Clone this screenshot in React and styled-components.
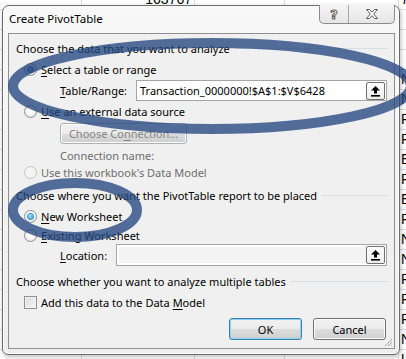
import styled, { createGlobalStyle } from "styled-components"

const GlobalStyle = createGlobalStyle`
* {
    box-sizing: border-box;
}
html, body {
    margin: 0;
    background-color: #ffffff;
    overflow: hidden;
}
body {
    font-family: "Noto Sans", "Open Sans", sans-serif;
    font-size: 11px;
    color: #000;
}
`
const Screen = styled.div`
    position: relative;
    width: 406px;
    height: 359px;
    overflow: hidden;
    background-color: #ffffff;
`
const Sheet = styled.div`
    display: flex;
    flex-direction: column;
    margin-top: -10px;
`
const SheetRow = styled.div`
    display: grid;
    grid-template-columns: 82px 113px 90px 114px 80px;
    height: 20px;
    border-bottom: 1px solid #dadcdd;
`
const Cell = styled.div`
    border-right: 1px solid #dadcdd;
    font-family: "Liberation Sans", Arial, sans-serif;
    font-size: 14px;
    line-height: 19px;
    padding: 0 2px;
    white-space: nowrap;
    overflow: hidden;
    text-align: ${(p) => (p.$right ? "right" : "left")};
    color: #000;
`
const Window = styled.div`
    position: absolute;
    left: 2px;
    top: 5px;
    width: 398px;
    height: 350px;
    display: flex;
    flex-direction: column;
    padding: 0 4px 5px 5px;
    border: 1px solid #6a6a6a;
    border-radius: 7px 7px 6px 6px;
    background: linear-gradient(#f8f8f8, #eeeeee);
    box-shadow: inset 0 0 0 1px #fdfdfd, 1px 2px 5px rgba(0, 0, 0, 0.25);
`
const TitleBar = styled.div`
    height: 27px;
    display: flex;
    align-items: flex-start;
`
const Title = styled.div`
    margin: 5px 0 0 1px;
    line-height: 16px;
    font-size: 11.5px;
`
const CaptionGroup = styled.div`
    margin-left: auto;
    margin-top: -1px;
    height: 19px;
    display: flex;
    border: 1px solid #8a8a8a;
    border-top: none;
    border-radius: 0 0 5px 5px;
    background: linear-gradient(#f4f4f4, #e6e6e6);
    overflow: hidden;
`
const CaptionButton = styled.div`
    width: ${(p) => p.$w}px;
    display: flex;
    align-items: center;
    justify-content: center;
    border-left: ${(p) => (p.$divider ? "1px solid #a8a8a8" : "none")};
    font-family: "DejaVu Sans", sans-serif;
    font-weight: bold;
    font-size: 13px;
    color: #ffffff;
    -webkit-text-stroke: 1px #5a5a5a;
`
const Client = styled.div`
    position: relative;
    flex: 1;
    display: flex;
    flex-direction: column;
    padding: 0 6px 0 7px;
    background-color: #f0f0f0;
    border: 1px solid #8f8f8f;
`
const Header = styled.div`
    height: 16px;
    margin-top: ${(p) => p.$mt}px;
    display: flex;
    align-items: center;
    white-space: nowrap;
    &::after {
        content: "";
        flex: 1;
        height: 1px;
        margin-left: 5px;
        background-color: #d5dee6;
    }
`
const Option = styled.div`
    height: 16px;
    margin-top: ${(p) => p.$mt}px;
    padding-left: 8px;
    display: flex;
    align-items: center;
    gap: 4px;
    color: ${(p) => (p.$disabled ? "#6d6d6d" : "#000")};
    white-space: nowrap;
`
const Radio = styled.span`
    width: 13px;
    height: 13px;
    border-radius: 50%;
    border: 1px solid ${(p) => (p.$disabled ? "#c4c4c4" : "#8e8f8f")};
    background: ${(p) =>
        p.$disabled
            ? "#f4f4f4"
            : "radial-gradient(circle at 50% 40%, #ffffff 30%, #dcdcdc 100%)"};
    display: flex;
    align-items: center;
    justify-content: center;
    &::after {
        content: "";
        display: ${(p) => (p.$checked ? "block" : "none")};
        width: 5px;
        height: 5px;
        border-radius: 50%;
        background: ${(p) =>
            p.$focus
                ? "radial-gradient(circle at 40% 35%, #9fe4ff, #1c8fd4)"
                : "radial-gradient(circle at 40% 35%, #7fb6dc, #1d4f80)"};
        box-shadow: 0 0 0 1px ${(p) => (p.$focus ? "#3d8fc2" : "#2b5d8c")};
    }
`
const Key = styled.span`
    text-decoration: underline;
    text-underline-offset: 2px;
`
const Field = styled.div`
    height: ${(p) => p.$h}px;
    margin-top: ${(p) => p.$mt}px;
    padding-left: 44px;
    display: flex;
    align-items: center;
`
const FieldLabel = styled.div`
    width: ${(p) => p.$w}px;
    white-space: nowrap;
`
const Input = styled.div`
    flex: 1;
    height: 100%;
    margin-right: 1px;
    display: flex;
    align-items: center;
    padding: 0 1px 0 3px;
    border: 1px solid #a5a5a5;
    background-color: ${(p) => (p.$disabled ? "#f3f3f3" : "#ffffff")};
    box-shadow: ${(p) => (p.$disabled ? "inset 0 0 0 2px #ffffff" : "none")};
    white-space: nowrap;
    overflow: hidden;
`
const InputText = styled.span`
    flex: 1;
`
const CollapseButton = styled.div`
    width: 19px;
    height: 18px;
    display: flex;
    align-items: center;
    justify-content: center;
    border: 1px solid #707070;
    border-radius: 2px;
    background: linear-gradient(#ffffff, #ebebeb);
`
const PushButton = styled.div`
    width: ${(p) => p.$w}px;
    height: ${(p) => p.$h}px;
    display: flex;
    align-items: center;
    justify-content: center;
    border: 1px solid ${(p) => (p.$default ? "#3c7fb1" : p.$disabled ? "#adb2b5" : "#707070")};
    border-radius: 3px;
    background: linear-gradient(#f2f2f2 0%, #ebebeb 50%, #dddddd 51%, #cfcfcf 100%);
    box-shadow: ${(p) => (p.$default ? "inset 0 0 0 1px #8ad3f7" : "inset 0 0 0 1px #fbfbfb")};
    color: ${(p) => (p.$disabled ? "#838383" : "#000")};
    white-space: nowrap;
`
const IndentButton = styled.div`
    margin-top: ${(p) => p.$mt}px;
    padding-left: 44px;
    display: flex;
`
const Note = styled.div`
    height: 16px;
    margin-top: ${(p) => p.$mt}px;
    padding-left: 44px;
    display: flex;
    align-items: center;
    color: #6d6d6d;
`
const CheckBox = styled.span`
    width: 13px;
    height: 13px;
    border: 1px solid #8e8f8f;
    background: linear-gradient(135deg, #dcdcdc, #f6f6f6);
    box-shadow: inset 0 0 0 1px #f4f4f4;
`
const Footer = styled.div`
    margin-top: 8px;
    padding-right: 2px;
    display: flex;
    justify-content: flex-end;
    gap: 11px;
`
const Grip = styled.svg`
    position: absolute;
    right: 1px;
    bottom: 1px;
`
const Annotation = styled.svg`
    position: absolute;
    left: 0;
    top: 0;
    pointer-events: none;
`

const sheetLetters = ["7 REC", "", "", "", "N", "N", "R", "R", "E", "R", "E", "R", "N", "N", "R", "R", "R", "N", "U"]

function UpArrow() {
    return (
        <svg width="11" height="12" viewBox="0 0 11 12">
            <path d="M5.5 1 L10 5.5 L7 5.5 L7 8.5 L4 8.5 L4 5.5 L1 5.5 Z" fill="#000" />
            <rect x="1" y="10" width="9" height="1.6" fill="#000" />
        </svg>
    )
}

function CloseGlyph() {
    return (
        <svg width="14" height="12" viewBox="0 0 14 12">
            <path
                d="M1.5 1.5 H4.5 L7 4.3 L9.5 1.5 H12.5 L8.7 6 L12.5 10.5 H9.5 L7 7.7 L4.5 10.5 H1.5 L5.3 6 Z"
                fill="#ffffff"
                stroke="#5a5a5a"
                strokeWidth="1"
                strokeLinejoin="round"
            />
        </svg>
    )
}

function App() {
    return (
        <>
            <GlobalStyle />
            <Screen>
                <Sheet>
                    {sheetLetters.map((letter, i) => (
                        <SheetRow key={i}>
                            <Cell />
                            <Cell $right>{i === 0 ? "163767" : ""}</Cell>
                            <Cell />
                            <Cell />
                            <Cell>{letter}</Cell>
                        </SheetRow>
                    ))}
                </Sheet>

                <Window>
                    <TitleBar>
                        <Title>Create PivotTable</Title>
                        <CaptionGroup>
                            <CaptionButton $w={28}>?</CaptionButton>
                            <CaptionButton $w={46} $divider>
                                <CloseGlyph />
                            </CaptionButton>
                        </CaptionGroup>
                    </TitleBar>

                    <Client>
                        <Header $mt={6}>Choose the data that you want to analyze</Header>
                        <Option $mt={5}>
                            <Radio $checked />
                            <span><Key>S</Key>elect a table or range</span>
                        </Option>
                        <Field $h={21} $mt={3}>
                            <FieldLabel $w={76}><Key>T</Key>able/Range:</FieldLabel>
                            <Input>
                                <InputText>Transaction_0000000!$A$1:$V$6428</InputText>
                                <CollapseButton><UpArrow /></CollapseButton>
                            </Input>
                        </Field>
                        <Option $mt={2}>
                            <Radio />
                            <span><Key>U</Key>se an external data source</span>
                        </Option>
                        <IndentButton $mt={4}>
                            <PushButton $w={127} $h={21} $disabled>Choose Co<Key>n</Key>nection...</PushButton>
                        </IndentButton>
                        <Note $mt={3}>Connection name:</Note>
                        <Option $mt={1} $disabled>
                            <Radio $disabled />
                            <span>Use this workbook's Data Model</span>
                        </Option>

                        <Header $mt={7}>Choose where you want the PivotTable report to be placed</Header>
                        <Option $mt={5}>
                            <Radio $checked $focus />
                            <span><Key>N</Key>ew Worksheet</span>
                        </Option>
                        <Option $mt={3}>
                            <Radio />
                            <span><Key>E</Key>xisting Worksheet</span>
                        </Option>
                        <Field $h={22} $mt={1}>
                            <FieldLabel $w={56}><Key>L</Key>ocation:</FieldLabel>
                            <Input $disabled>
                                <InputText />
                                <CollapseButton><UpArrow /></CollapseButton>
                            </Input>
                        </Field>

                        <Header $mt={7}>Choose whether you want to analyze multiple tables</Header>
                        <Option $mt={5}>
                            <CheckBox />
                            <span>Add this data to the Data <Key>M</Key>odel</span>
                        </Option>

                        <Footer>
                            <PushButton $w={73} $h={22} $default>OK</PushButton>
                            <PushButton $w={73} $h={22}>Cancel</PushButton>
                        </Footer>

                        <Grip width="10" height="10" viewBox="0 0 10 10">
                            <path d="M9 2 L2 9 M9 5 L5 9 M9 8 L8 9" stroke="#a0a0a0" strokeWidth="1" />
                        </Grip>
                    </Client>
                </Window>

                <Annotation width="406" height="359" viewBox="0 0 406 359">
                    <ellipse cx="212" cy="86" rx="199" ry="43" fill="none" stroke="#24477f" strokeOpacity="0.78" strokeWidth="10" />
                    <ellipse cx="75" cy="210" rx="62" ry="27" fill="none" stroke="#24477f" strokeOpacity="0.78" strokeWidth="10" />
                </Annotation>
            </Screen>
        </>
    )
}

export default App
